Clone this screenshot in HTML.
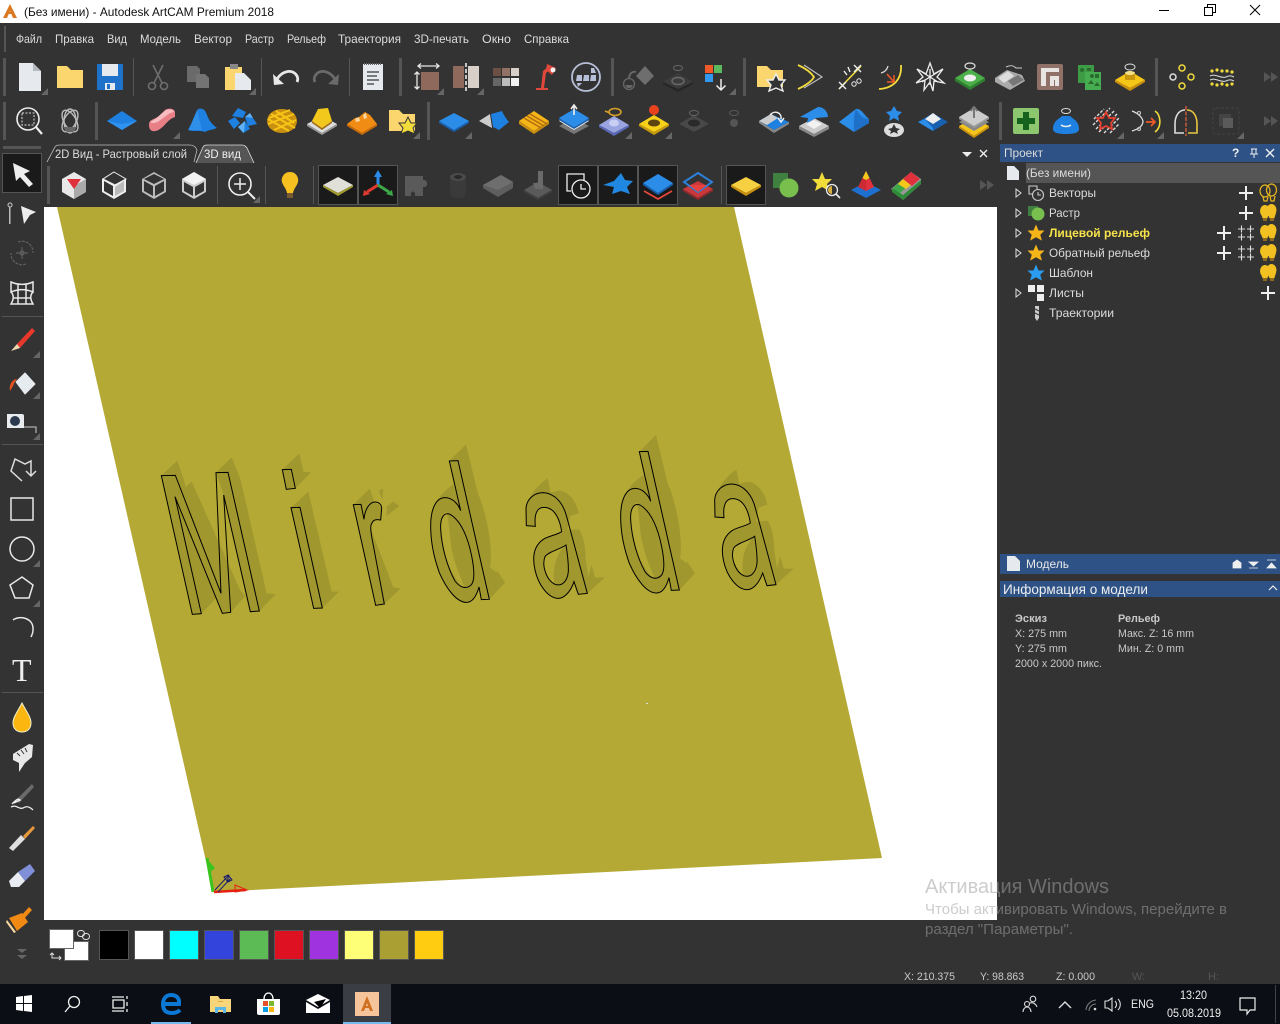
<!DOCTYPE html>
<html lang="ru"><head><meta charset="utf-8"><title>Autodesk ArtCAM Premium 2018</title>
<style>html,body{margin:0;padding:0;background:#333;overflow:hidden}svg{display:block}
text{font-family:"Liberation Sans","Noto Sans CJK SC",sans-serif}
.m{font-size:12px;fill:#dcdcdc}.s{font-size:11px;fill:#c8c8c8}
.o{fill:none;stroke:#000;stroke-width:3}.h{fill:#a0972f}
.g{fill:none;stroke:#6e6e6e;stroke-width:1.6}</style></head>
<body>
<svg xmlns="http://www.w3.org/2000/svg" width="1280" height="1024" viewBox="0 0 1280 1024">
<defs>
<polygon id="tri" points="6,0 6,7 -1,7" fill="#666"/>
<g id="bulb"><ellipse cx="-3" cy="-2" rx="5" ry="6" fill="#f2c020"/><polygon points="-7,1 1,1 -1,6 -5,6" fill="#f2c020"/><ellipse cx="3.500" cy="-3" rx="5" ry="6" fill="#f2c020"/><polygon points="-1,0 8,0 6,6 2,6" fill="#f2c020"/><rect x="-5" y="5" width="4" height="3" fill="#8d6a20"/><rect x="2" y="5" width="4" height="3" fill="#8d6a20"/></g>
<g id="star"><polygon points="0,-10 3,-3 10,-3 5,2 7,9 0,5 -7,9 -5,2 -10,-3 -3,-3"/></g>
<g id="plus"><path d="M-7,0 H7 M0,-7 V7" stroke="#eee" stroke-width="2" fill="none"/></g>
<g id="pp"><path d="M-8,-4 h7 M-4.500,-7.500 v7 M1,-4 h7 M4.500,-7.500 v7 M-8,4 h7 M-4.500,.500 v7 M1,4 h7 M4.500,.500 v7" stroke="#ddd" stroke-width="1.100" fill="none"/></g>
<path id="dar" d="M0,-5 L7,0 L0,5Z M7,-5 L14,0 L7,5Z" fill="#555"/>
<path id="D" d="M478,65 L504,64 L598,480 L574,481 L567,443 C558,475 545,490 528,489 C500,488 470,450 448,400 C430,350 422,300 422,260 C422,205 440,175 465,175 C488,175 505,195 512,214 Z M480,225 C462,218 450,235 452,270 C455,320 470,380 495,425 C510,445 530,452 545,435 C555,420 552,385 545,350 C535,300 515,245 480,225 Z"/>
<path id="A" d="M139,287 L138,235 C140,205 165,188 190,188 C225,190 250,220 260,260 L322,490 L295,493 L282,455 C270,490 250,505 235,505 C205,505 175,465 165,420 C155,375 165,345 190,328 C205,318 230,315 245,305 C240,270 225,232 192,232 C172,232 162,250 166,289 Z M258,345 C240,358 205,365 195,380 C185,405 198,450 225,463 C245,470 262,455 265,425 C266,400 262,370 258,345 Z"/>
<g id="As"><path class="h" d="M139,287 L138,235 C140,210 170,165 203,145 L212,188 L222,185 C255,170 290,210 296,250 L270,258 L262,300 L298,298 C320,340 315,380 318,395 L325,440 L335,405 L345,442 L375,442 L322,490 L295,493 L282,455 C270,490 250,505 235,505 C205,505 175,465 165,420 C155,375 165,345 190,328 C205,318 230,315 245,305 C240,270 225,232 192,232 C172,232 162,250 166,289Z"/><path fill="#b4a935" d="M258,345 C240,358 205,365 195,380 C185,405 198,450 225,463 C215,430 225,370 258,345Z"/></g>
<g id="Ds"><path class="h" d="M478,65 L528,15 L563,160 C590,220 610,330 600,385 L620,400 L622,395 L645,430 L598,480 L574,481 L567,443 C558,475 545,490 528,489 C500,488 470,450 448,400 C430,350 422,300 422,260 C422,205 445,165 490,135 L498,165Z"/><path fill="#b4a935" d="M470,217 C452,225 448,270 460,320 C470,370 490,420 525,448 C515,420 495,380 485,330 C478,290 478,250 470,217Z"/></g>
</defs>

<rect width="1280" height="1024" fill="#333"/>
<!-- title bar -->
<rect width="1280" height="23" fill="#fff"/>
<path d="M3,18 L10,4 L17,18 L13,18 L10,11 L7,18Z" fill="#d97a22"/><rect x="8" y="12" width="5" height="2" fill="#d97a22"/>
<text x="24" y="16" font-size="12" fill="#111" textLength="250" lengthAdjust="spacingAndGlyphs">(Без имени) - Autodesk ArtCAM Premium 2018</text>
<path d="M1159,10.500 H1169" stroke="#000"/>
<path d="M1204.500,7.500 H1212.500 V15.500 H1204.500Z M1207.500,7.500 V4.500 H1215.500 V12.500 H1212.500" fill="none" stroke="#000"/>
<path d="M1250,5 L1260,15 M1260,5 L1250,15" stroke="#000"/>

<!-- menu -->
<rect x="4" y="26" width="2" height="26" fill="#555"/>
<text class="m" x="16" y="43" textLength="26" lengthAdjust="spacingAndGlyphs">Файл</text><text class="m" x="55" y="43" textLength="39" lengthAdjust="spacingAndGlyphs">Правка</text><text class="m" x="107" y="43" textLength="20" lengthAdjust="spacingAndGlyphs">Вид</text><text class="m" x="140" y="43" textLength="41" lengthAdjust="spacingAndGlyphs">Модель</text><text class="m" x="194" y="43" textLength="38" lengthAdjust="spacingAndGlyphs">Вектор</text><text class="m" x="245" y="43" textLength="29" lengthAdjust="spacingAndGlyphs">Растр</text><text class="m" x="287" y="43" textLength="39" lengthAdjust="spacingAndGlyphs">Рельеф</text><text class="m" x="338" y="43" textLength="63" lengthAdjust="spacingAndGlyphs">Траектория</text><text class="m" x="414" y="43" textLength="55" lengthAdjust="spacingAndGlyphs">3D-печать</text><text class="m" x="482" y="43" textLength="29" lengthAdjust="spacingAndGlyphs">Окно</text><text class="m" x="524" y="43" textLength="45" lengthAdjust="spacingAndGlyphs">Справка</text>

<!-- grips & separators -->
<g fill="#555">
<rect x="3" y="58" width="3" height="38"/><rect x="3" y="102" width="3" height="38"/>
<rect x="133" y="58" width="1" height="38"/><rect x="261" y="58" width="1" height="38"/><rect x="349" y="58" width="1" height="38"/>
<rect x="399" y="58" width="3" height="38"/><rect x="611" y="58" width="3" height="38"/><rect x="743" y="58" width="3" height="38"/><rect x="1155" y="58" width="3" height="38"/>
<rect x="95" y="102" width="3" height="38"/><rect x="427" y="102" width="3" height="38"/><rect x="999" y="102" width="3" height="38"/>
<rect x="3" y="146" width="38" height="3"/>
<rect x="47" y="166" width="3" height="38"/><rect x="217" y="166" width="1" height="38"/><rect x="265" y="166" width="1" height="38"/><rect x="313" y="166" width="1" height="38"/><rect x="721" y="166" width="1" height="38"/>
</g>

<!-- row 1 -->
<g transform="translate(30,77)"><path d="M-11,-14 H3 L11,-6 V14 H-11Z" fill="#e6eaee"/><path d="M3,-14 L11,-6 H3Z" fill="#b5bac0"/></g><use href="#tri" x="42" y="88"/>
<g transform="translate(70,77)"><path d="M-13,-11 H-3 L1,-7 H13 V11 H-13Z" fill="#fbd66f"/></g>
<g transform="translate(110,77)"><path d="M-13,-13 H13 V13 H-13Z" fill="#1f72c9"/><rect x="-8" y="-13" width="16" height="12" fill="#e6eaee"/><rect x="-5" y="6" width="10" height="7" fill="#e6eaee"/><rect x="-3" y="7" width="3" height="5" fill="#1f72c9"/></g>
<g transform="translate(158,77)" class="g"><path d="M-5,-12 L4,6 M5,-12 L-4,6" /><circle cx="-6" cy="9" r="3.500"/><circle cx="6" cy="9" r="3.500"/></g>
<g transform="translate(198,77)" fill="#6a6a6a"><path d="M-11,-11 H-1 L2,-8 V5 H-11Z"/><path d="M-2,-3 H7 L11,1 V11 H-2Z" fill="#747474"/></g>
<g transform="translate(238,77)"><path d="M-13,-10 H4 V13 H-13Z" fill="#fbd66f"/><rect x="-8" y="-13" width="8" height="5" fill="#888"/><path d="M-3,-4 H6 L13,3 V13 H-3Z" fill="#e6eaee"/></g><use href="#tri" x="250" y="88"/>
<g transform="translate(286,77)"><path d="M-9,2 C-3,-7 7,-8 11,-1 C12,1 12,3 11,5" fill="none" stroke="#e8e8e8" stroke-width="2.800"/><polygon points="-13,-3 -12,8 -2,7" fill="#e8e8e8"/></g>
<g transform="translate(326,77)"><path d="M9,2 C3,-7 -7,-8 -11,-1 C-12,1 -12,3 -11,5" fill="none" stroke="#6a6a6a" stroke-width="2.800"/><polygon points="13,-3 12,8 2,7" fill="#6a6a6a"/></g>
<g transform="translate(373,77)"><rect x="-10" y="-13" width="20" height="26" fill="#e6eaee"/><path d="M-6,-5 H6 M-6,-1 H4 M-6,3 H6 M-6,7 H1" stroke="#555" stroke-width="1.400"/><path d="M-9,-13 H9" stroke="#666" stroke-width="2" stroke-dasharray="1 1"/></g>
<g transform="translate(426,77)"><rect x="-5" y="-5" width="18" height="18" fill="#8f6a5c"/><path d="M-8,-11 H13 M-5,-13.500 L-8,-11 L-5,-8.500 M10,-13.500 L13,-11 L10,-8.500 M-9,-5 V12 M-11.500,-2.500 L-9,-5 L-6.500,-2.500 M-11.500,9.500 L-9,12 L-6.500,9.500" fill="none" stroke="#e8e8e8" stroke-width="1.300"/></g><use href="#tri" x="438" y="88"/>
<g transform="translate(466,77)"><rect x="-13" y="-11" width="11" height="22" fill="#8f6a5c"/><rect x="2" y="-11" width="11" height="22" fill="#d9cfc9"/><path d="M0,-14 V14" stroke="#e8e8e8" stroke-width="1.600" stroke-dasharray="4 2"/></g><use href="#tri" x="478" y="88"/>
<g transform="translate(506,77)"><rect x="-13" y="-9" width="8" height="8" fill="#6c4f43"/><rect x="-4" y="-9" width="8" height="8" fill="#917264"/><rect x="5" y="-9" width="8" height="8" fill="#d9cfc9"/><rect x="-13" y="1" width="8" height="8" fill="#666"/><rect x="-4" y="1" width="8" height="8" fill="#bbb"/><rect x="5" y="1" width="8" height="8" fill="#f2f2f2"/></g>
<g transform="translate(546,77)" fill="#e0483c"><rect x="-10" y="11" width="12" height="2"/><path d="M-5,11 L-3,-6 L3,-11 L5,-8 L0,-4 L-2,11Z"/><path d="M1,-13 L10,-9 L6,-2 L0,-7Z"/><circle cx="7" cy="-7" r="2.500" fill="#f2f2f2"/></g>
<g transform="translate(586,77)"><circle r="14" fill="none" stroke="#b8bfd8" stroke-width="1.800"/><g fill="#b8bfd8"><path d="M-9,-2 h5 v6 h-6Z M-2,-2 h5 v6 h-6Z M5,-2 h5 v6 h-6Z M5,-9 h3 l2,5 h-5Z M-9,6 h5 l-4,4Z"/></g></g>
<g transform="translate(637,77)"><polygon points="-3,-3 6,-13 15,-3 6,6" fill="#6e6e6e" transform="translate(2,2)"/><circle cx="-8" cy="7" r="5.500" fill="none" stroke="#666" stroke-width="1.300"/><path d="M-12,8 H-4 L-6,11 H-10Z" fill="#666"/><path d="M-8,2 C-8,-4 -4,-6 -1,-5" stroke="#666" fill="none" stroke-width="2"/></g>
<g transform="translate(678,77)"><polygon points="-15,5 0,-4 15,5 0,12" fill="#3c3c3c"/><polygon points="-15,5 0,12 15,5 15,7 0,15 -15,7" fill="#262626"/><ellipse cy="4" rx="6" ry="3.500" fill="none" stroke="#6a6a6a" stroke-width="1.400"/><ellipse cy="-9" rx="4.500" ry="2.500" fill="none" stroke="#6a6a6a"/></g>
<g transform="translate(717,77)"><rect x="-12" y="-12" width="8" height="8" fill="#f05a28"/><rect x="-3" y="-12" width="8" height="8" fill="#5cb85c"/><rect x="-12" y="-3" width="8" height="8" fill="#3399ee"/><path d="M4,2 V13 M-0.500,8.500 L4,13 L8.500,8.500" stroke="#eee" stroke-width="1.500" fill="none"/></g><use href="#tri" x="730" y="88"/>
<g transform="translate(770,77)"><path d="M-13,-11 H-3 L1,-7 H13 V10 H-13Z" fill="#fbd66f"/><polygon points="6,-3 9,3 15,3 11,8 13,14 6,11 -1,14 1,8 -3,3 3,3" fill="#333" stroke="#eee" stroke-width="1.400"/></g>
<g transform="translate(810,77)" fill="none"><path d="M-12,-12 C-3,-8 2,-3 4,0 C2,4 -5,9 -12,12" stroke="#f2dc3c" stroke-width="1.800"/><path d="M-6,-12 L12,0 L-6,11" stroke="#ccc" stroke-width="1.200" opacity=".9"/></g>
<g transform="translate(850,77)" fill="none"><path d="M-11,12 L11,-11" stroke="#f2dc3c" stroke-width="1.600"/><path d="M4,-12 L11,-5 M11,-12 L4,-5 M-11,5 L-4,12 M-4,5 L-11,12 M-6,-6 L-3,-2 M-2,-10 L0,-5" stroke="#eee" stroke-width="1.400"/><circle cx="4" cy="7" r="2.200" stroke="#eee"/><circle cx="9" cy="4" r="2.200" stroke="#eee"/></g>
<g transform="translate(890,77)" fill="none"><path d="M11,-12 C12,2 4,11 -11,12" stroke="#f2dc3c" stroke-width="1.800"/><path d="M-2,-11 C-3,-7 -5,-5 -9,-4" stroke="#ddd" stroke-width="1.300"/><path d="M-3,-3 L4,5 M4,-2 V5 H-3" stroke="#f05a28" stroke-width="1.500"/></g>
<g transform="translate(930,77)" fill="none" stroke="#eee" stroke-width="1.300"><path d="M0,-14 L4,-3 L13,-8 L7,0 L14,6 L4,4 L3,14 L0,5 L-6,13 L-5,3 L-14,6 L-7,0 L-13,-8 L-4,-3Z M0,-8 V8 M-8,-5 L8,5 M8,-5 L-8,5"/></g>
<g transform="translate(970,79)"><polygon points="-15,-1 0,-10 15,-1 0,8" fill="#4cb04a"/><polygon points="-15,-1 0,8 15,-1 15,2 0,11 -15,2" fill="#2e7f30"/><ellipse cy="-1" rx="6" ry="3.500" fill="#eee"/><ellipse cy="-13" rx="5" ry="3" fill="none" stroke="#ddd" stroke-width="1.200"/></g>
<g transform="translate(1010,78)"><polygon points="-15,0 -3,-8 12,-3 15,3 0,12 -15,4" fill="#aaa"/><path d="M-12,0 L-2,-7 L4,-2 L-6,5Z" fill="#ddd"/><path d="M-2,3 L8,-3 L14,2 L3,8Z" fill="#777"/><path d="M-4,-11 C0,-13 3,-13 6,-10 H12" stroke="#ccc" fill="none"/></g>
<g transform="translate(1050,77)"><rect x="-13" y="-13" width="26" height="26" rx="2" fill="#8f7168"/><path d="M-9,9 V-9 H9 V-5 H-4 V9Z M0,9 V-1 H9 V9 H5 V3 H4 V9Z" fill="#e8e4e2"/></g>
<g transform="translate(1090,77)"><rect x="-12" y="-12" width="16" height="18" fill="#3d9b46"/><rect x="-5" y="-5" width="16" height="18" fill="#46ad50"/><g fill="#2a6b30"><circle cx="-8" cy="-7" r="2"/><rect x="-3" y="-9" width="4" height="3"/><polygon points="-2,7 1,3 4,7"/><polygon points="4,9 7,5 10,9"/><circle cx="2" cy="-1" r="2"/><rect x="5" y="-3" width="4" height="4"/></g></g>
<g transform="translate(1130,79)"><polygon points="-15,1 0,-8 15,1 0,9" fill="#f5c518"/><polygon points="-15,1 0,9 15,1 15,3 0,12 -15,3" fill="#c98f10"/><rect x="-5" y="-6" width="10" height="7" fill="#c8960f"/><ellipse cy="-6" rx="5" ry="2" fill="#f2e088"/><ellipse cy="-12" rx="5" ry="3" fill="none" stroke="#ddd"/></g>
<g transform="translate(1182,77)" fill="none" stroke="#f2dc3c" stroke-width="1.500"><circle cy="-9" r="3"/><circle cx="9" r="3"/><circle cy="9" r="3"/><circle cx="-9" r="3" stroke="#ddd"/></g>
<g transform="translate(1222,77)"><path d="M-12,-1 C-6,-4 -2,2 4,0 C8,-2 10,-1 12,0 M-12,3 C-6,0 -2,6 4,4 C8,2 10,3 12,4" fill="none" stroke="#ddd"/><g fill="#f2dc3c"><circle cx="-10" cy="-6" r="1.600"/><circle cx="-5" cy="-7" r="1.600"/><circle cx="0" cy="-6" r="1.600"/><circle cx="5" cy="-6" r="1.600"/><circle cx="10" cy="-5" r="1.600"/><circle cx="-10" cy="7" r="1.600"/><circle cx="-5" cy="8" r="1.600"/><circle cx="0" cy="7" r="1.600"/><circle cx="5" cy="8" r="1.600"/><circle cx="10" cy="7" r="1.600"/></g></g>
<use href="#dar" x="1264" y="77"/>

<!-- row 2 -->
<g transform="translate(30,121)" fill="none"><circle cx="-2" cy="-2" r="11" stroke="#eee" stroke-width="1.600"/><rect x="-8" y="-8" width="12" height="12" stroke="#ddd" stroke-dasharray="2 1.500"/><path d="M6,6 L12,13" stroke="#eee" stroke-width="2.200"/></g>
<g transform="translate(70,121)" fill="none" stroke="#bbb" stroke-width="1.400"><ellipse rx="6" ry="12"/><ellipse rx="12" ry="6" transform="rotate(60)"/><ellipse rx="12" ry="6" transform="rotate(-60)"/><path d="M-7,6 H7 L3,11 H-3Z" fill="#666" stroke="none"/></g>
<g transform="translate(122,121)"><polygon points="-15,0 0,-10 15,0 0,9" fill="#1e80e0"/><polygon points="-15,0 0,9 15,0 0,3" fill="#2f92ee"/></g>
<g transform="translate(162,121)"><path d="M-13,4 C-13,-2 -8,-1 -3,-5 L3,-11 C6,-13 12,-13 13,-9 L13,-4 C6,-2 4,4 -2,8 C-6,11 -13,12 -13,4Z" fill="#e87f86"/><path d="M-12,1 C-8,-1 -4,-4 -1,-7 L4,-11 C7,-12 11,-12 12,-9 C6,-8 2,-3 -3,0 C-6,2 -9,3 -12,1Z" fill="#f6bcc0"/></g><use href="#tri" x="174" y="132"/>
<g transform="translate(202,121)"><path d="M-14,9 C-10,2 -8,-5 -4,-12 C0,-13 3,-12 5,-6 C7,0 11,4 15,7 C10,9 6,9 3,11 C-2,9 -8,11 -14,9Z" fill="#1e80e0"/><path d="M-5,-11 L0,9 L-13,9Z" fill="#2f90ea"/></g>
<g transform="translate(242,121)" fill="#1e80e0"><polygon points="-4,-13 4,-9 1,-3 -10,-5"/><polygon points="-14,0 -7,-4 -2,2 -8,8"/><polygon points="3,-4 11,-3 15,3 6,5"/><polygon points="-4,6 3,0 8,8 1,12"/><polygon points="3,-4 8,-8 11,-3" fill="#5fb0f5"/><polygon points="-4,6 3,0 2,12" fill="#5fb0f5"/></g>
<g transform="translate(282,121)"><ellipse rx="15" ry="12" fill="#c98f10"/><path d="M-13,-3 L8,-11 M-14,3 L12,-7 M-8,9 L14,-1 M-11,-7 L13,7 M-6,-10 L12,2 M-14,-2 L7,10" stroke="#f5c518" stroke-width="2"/></g>
<g transform="translate(322,121)"><polygon points="-15,3 0,-5 15,3 0,12" fill="#ddd"/><polygon points="-15,3 0,12 15,3 15,5 0,14 -15,5" fill="#999"/><polygon points="-10,0 -4,-12 6,-13 10,0 0,7" fill="#f2c81c"/><polygon points="-10,0 0,7 10,0 10,2 0,9 -10,2" fill="#a26e1a"/></g>
<g transform="translate(362,121)"><polygon points="-15,3 -7,-3 -3,-4 3,-9 8,-6 15,3 0,12" fill="#f08c14"/><polygon points="-15,3 0,12 15,3 15,5 0,14 -15,5" fill="#c86a0a"/><polygon points="-7,-2 -3,-4 -2,0 -6,1" fill="#f8d8a0"/><polygon points="1,-6 4,-8 5,-3 2,-2" fill="#f8d8a0"/></g>
<g transform="translate(402,121)"><path d="M-13,-11 H-3 L1,-7 H13 V10 H-13Z" fill="#fbd66f"/><polygon points="6,-4 9,2 15,2 11,7 13,13 6,10 -1,13 1,7 -3,2 3,2" fill="#f2dc3c" stroke="#333"/></g><use href="#tri" x="414" y="132"/>
<g transform="translate(454,121)"><polygon points="-15,0 0,-8 15,0 0,9" fill="#2b8de8"/><polygon points="-15,0 0,9 15,0 15,2 0,11 -15,2" fill="#1860b0"/></g><use href="#tri" x="466" y="132"/>
<g transform="translate(494,121)"><polygon points="-15,0 -4,-7 -2,7" fill="#ccc"/><path d="M-3,-7 L8,-10 C10,-5 14,0 15,1 L5,9 L-1,6Z" fill="#1e80e0"/></g>
<g transform="translate(534,121)"><polygon points="-15,0 0,-10 15,0 0,10" fill="#f5b518"/><polygon points="-15,0 0,10 15,0 15,3 0,13 -15,3" fill="#c98f10"/><path d="M-10,-3 L7,7 M-7,-5 L10,5 M-4,-7 L13,3" stroke="#b06c10" stroke-width="1.400"/></g>
<g transform="translate(574,121)"><polygon points="-15,5 0,-3 15,5 0,13" fill="#777"/><polygon points="-15,0 0,-9 15,0 0,9" fill="#eee"/><polygon points="-15,-3 0,-12 15,-3 0,6" fill="#2b8de8"/><polygon points="-15,-3 0,6 15,-3 15,-1 0,8 -15,-1" fill="#1860b0"/><path d="M0,-6 V-16 M-3,-12 L0,-16 L3,-12" stroke="#eee" stroke-width="1.600" fill="none"/></g>
<g transform="translate(614,121)"><polygon points="-15,4 0,-5 15,4 0,12" fill="#9aa4e0"/><polygon points="-15,4 0,12 15,4 15,6 0,15 -15,6" fill="#5a68b8"/><ellipse cy="2" rx="5" ry="3.500" fill="#c8cff2"/><ellipse cx="1" cy="-9" rx="6" ry="3.500" fill="none" stroke="#d4a028" stroke-width="1.600"/><path d="M-9,-10 L-4,-8" stroke="#d4a028" stroke-width="1.600"/></g><use href="#tri" x="626" y="132"/>
<g transform="translate(654,122)"><polygon points="-15,2 0,-7 15,2 0,10" fill="#f7d117"/><polygon points="-15,2 0,10 15,2 15,4 0,13 -15,4" fill="#c89a10"/><ellipse cy="1" rx="6" ry="3.500" fill="#5c4410"/><circle cy="-12" r="5" fill="#e8421e"/></g><use href="#tri" x="666" y="132"/>
<g transform="translate(694,122)"><polygon points="-15,2 0,-7 15,2 0,10" fill="#484848"/><polygon points="-15,2 0,10 15,2 15,4 0,13 -15,4" fill="#333"/><ellipse cy="1" rx="6" ry="3.500" fill="#2a2a2a"/><ellipse cy="-9" rx="4.500" ry="2.500" fill="none" stroke="#666"/></g>
<g transform="translate(734,119)"><ellipse cy="-6" rx="4.500" ry="2.500" fill="none" stroke="#5a5a5a"/><circle cy="4" r="4" fill="#555"/></g>
<g transform="translate(774,121)"><polygon points="-15,0 -3,-7 15,1 0,9" fill="#1e80e0"/><polygon points="-15,0 -3,-7 4,-3 -7,4" fill="#ccc"/><polygon points="-15,0 0,9 15,1 15,3 0,12 -15,2" fill="#888"/><path d="M-4,-6 C0,-11 8,-9 7,-2 M4,-3 L7,1 L10,-3" stroke="#eee" stroke-width="1.500" fill="none"/></g>
<g transform="translate(814,121)"><polygon points="-15,5 0,-3 15,5 0,13" fill="#ccc"/><polygon points="-15,5 0,13 15,5 15,8 0,16 -15,8" fill="#888"/><polygon points="-8,3 0,-1 8,3 0,8" fill="#f2f2f2"/><path d="M-14,-4 L4,-14 C10,-14 14,-9 14,-4 L2,-3 L-7,2 L-6,-3Z" fill="#2b8de8"/></g>
<g transform="translate(854,121)"><path d="M-15,1 L2,-12 C7,-13 10,-6 15,-2 L15,2 L0,11Z" fill="#2b8de8"/><path d="M2,-12 C5,-7 8,-2 15,-2 L15,2 L0,11 C0,4 -1,-4 2,-12Z" fill="#1e70c8"/></g>
<g transform="translate(894,121)"><polygon points="0,-15 3,-10 8,-9 4,-5 5,0 0,-3 -5,0 -4,-5 -8,-9 -3,-10" fill="#2b8de8"/><ellipse cy="9" rx="10" ry="7" fill="#ddd"/><polygon points="0,3 2,7 6,8 3,10 4,13 0,11 -4,13 -3,10 -6,8 -2,7" fill="#333"/></g>
<g transform="translate(933,121)"><polygon points="-15,1 0,-8 15,1 0,10" fill="#1860b0"/><polygon points="-8,-2 0,-8 8,-2 0,3" fill="#eee"/><polygon points="-15,1 0,10 0,7 -8,-2" fill="#2b8de8"/></g>
<g transform="translate(974,121)"><polygon points="-15,5 0,-3 15,5 0,15" fill="#f5c518"/><polygon points="-15,5 0,15 15,5 15,7 0,17 -15,7" fill="#c98f10"/><polygon points="-15,1 0,-7 15,1 0,10" fill="#888"/><polygon points="-15,-4 0,-13 15,-4 0,5" fill="#ccc"/><polygon points="-15,-4 0,5 15,-4 15,-2 0,7 -15,-2" fill="#999"/><path d="M0,-3 V-14 M-3.500,-10 L0,-14 L3.500,-10" stroke="#777" stroke-width="2" fill="none"/></g>
<g transform="translate(1026,121)"><rect x="-13" y="-13" width="26" height="26" rx="2" fill="#8cc66e"/><path d="M-3,-9 H3 V-3 H9 V3 H3 V9 H-3 V3 H-9 V-3 H-3Z" fill="#15611e"/></g>
<g transform="translate(1066,121)"><path d="M-13,8 C-13,0 -7,-2 -4,-5 H4 C7,-2 13,0 13,8 C13,12 7,13 0,13 C-7,13 -13,12 -13,8Z" fill="#1e80e0"/><path d="M-5,4 C-2,6 2,6 5,4" stroke="#eee" fill="none" stroke-width="1.500"/><ellipse cy="-10" rx="4.500" ry="2.500" fill="none" stroke="#ddd"/></g>
<g transform="translate(1106,121)"><path d="M-12,-2 L-2,-12 M-13,4 L4,-13 M-10,8 L9,-11 M-7,11 L12,-8 M-2,12 L13,-3 M4,12 L13,3" stroke="#ddd" stroke-width="1.400" stroke-dasharray="3 1.500"/><polygon points="0,-9 3,-3 9,-3 5,2 6,8 0,5 -6,8 -5,2 -9,-3 -3,-3" fill="#333" stroke="#e84030" stroke-width="1.700"/></g><use href="#tri" x="1118" y="132"/>
<g transform="translate(1146,121)" fill="none"><path d="M-14,-10 C-6,-7 -3,-2 -3,1 C-4,6 -8,8 -14,10" stroke="#ddd" stroke-width="1.300"/><circle cx="-7" cy="-8" r="1.500" stroke="#ccc"/><circle cx="-7" cy="8" r="1.500" stroke="#ccc"/><path d="M0,1 H8 M5,-3 L9,1 L5,5" stroke="#f05a28" stroke-width="1.700"/><path d="M9,-10 C15,-6 16,6 9,11" stroke="#f2dc3c" stroke-width="1.600"/></g><use href="#tri" x="1158" y="132"/>
<g transform="translate(1186,121)" fill="none"><path d="M-1,-11 C-8,-11 -11,-4 -11,3 V12 H-2" stroke="#ddd" stroke-width="1.600"/><path d="M1,-11 C8,-11 11,-4 11,3 V12 H2" stroke="#e8c840" stroke-width="1.600"/><path d="M0,-15 V15" stroke="#c85a3c" stroke-width="1.500" stroke-dasharray="4 1.500"/></g>
<g transform="translate(1226,121)"><rect x="-13" y="-13" width="26" height="26" rx="3" fill="none" stroke="#444" stroke-dasharray="3 2"/><rect x="-7" y="-7" width="12" height="12" fill="#444"/><rect x="-3" y="-3" width="10" height="10" fill="#5a5a5a"/></g><use href="#tri" x="1238" y="132"/>
<use href="#dar" x="1264" y="121"/>

<!-- tabs -->
<path d="M47,162 L55,147 Q56,145 60,145 H190 Q195,145 197,150 L194,162" fill="#333" stroke="#bbb" stroke-width=".8"/>
<path d="M196,163 L203,147 Q204,145 207,145 H242 Q245,145 247,148 L254,163Z" fill="#555"/><path d="M196,163 L203,147 Q204,145 207,145 H242 Q245,145 247,148 L254,163" fill="none" stroke="#ddd" stroke-width=".8"/>
<text x="55" y="158" font-size="12" fill="#ddd" textLength="132" lengthAdjust="spacingAndGlyphs">2D Вид - Растровый слой</text>
<text x="204" y="158" font-size="12" fill="#eee" textLength="37" lengthAdjust="spacingAndGlyphs">3D вид</text>
<polygon points="962,152 972,152 967,157" fill="#eee"/><path d="M980,150 L987,157 M987,150 L980,157" stroke="#eee" stroke-width="1.400"/>

<!-- row 3 boxes -->
<g fill="#1a1a1a" stroke="#555"><rect x="318.500" y="165.500" width="39" height="39"/><rect x="358.500" y="165.500" width="39" height="39"/><rect x="558.500" y="165.500" width="39" height="39"/><rect x="598.500" y="165.500" width="39" height="39"/><rect x="638.500" y="165.500" width="39" height="39"/><rect x="726.500" y="165.500" width="39" height="39"/></g>
<g transform="translate(74,185)"><polygon points="0,-13 12,-6 12,7 0,14 -12,7 -12,-6" fill="#e8e8e8"/><polygon points="0,14 12,7 12,-6 0,1" fill="#aaa"/><polygon points="-7,-6 7,-6 0,4" fill="#e0303c"/></g>
<g transform="translate(114,185)"><polygon points="0,-13 12,-6 12,7 0,14 -12,7 -12,-6" fill="#eee"/><polygon points="-10,-4 -1,1 -1,11 -10,6" fill="#333"/><polygon points="0,-13 12,-6 1,0 -11,-6" fill="#333" stroke="#eee"/><polygon points="1,2 10,-4 10,6 1,11" fill="#bbb"/></g>
<g transform="translate(154,185)"><polygon points="0,-13 12,-6 12,7 0,14 -12,7 -12,-6" fill="#bbb"/><polygon points="0,-11 10,-6 0,-1 -10,-6" fill="#333"/><polygon points="-10,-4 -1,1 -1,11 -10,6" fill="#333"/><polygon points="1,1 10,-4 10,6 1,11" fill="#333"/></g>
<g transform="translate(194,185)"><polygon points="0,-13 12,-6 12,7 0,14 -12,7 -12,-6" fill="#ccc"/><polygon points="0,-13 12,-6 0,0 -12,-6" fill="#f2f2f2"/><polygon points="-10,-3 -1,2 -1,11 -10,6" fill="#333"/><polygon points="1,2 10,-3 10,6 1,11" fill="#333"/></g>
<g transform="translate(241,185)" fill="none"><circle cx="-1" cy="-1" r="11" stroke="#eee" stroke-width="1.600"/><path d="M-7,-1 H5 M-1,-7 V5" stroke="#eee" stroke-width="1.500"/><path d="M7,7 L14,14" stroke="#eee" stroke-width="2"/></g><use href="#tri" x="254" y="196"/>
<g transform="translate(290,185)"><path d="M0,-13 C7,-13 9,-6 8,-3 C7,1 4,3 3,8 H-3 C-4,3 -7,1 -8,-3 C-9,-6 -7,-13 0,-13Z" fill="#f6c120"/><rect x="-3" y="8" width="6" height="5" fill="#7a5a30"/></g>
<g transform="translate(338,185)"><polygon points="-15,0 0,-8 15,0 0,8" fill="#e0e0d8"/><polygon points="-15,0 0,8 15,0 15,2 0,11 -15,2" fill="#a09a30"/></g>
<g transform="translate(378,185)"><path d="M0,0 V-9" stroke="#2a8ce8" stroke-width="3"/><polygon points="-4,-8 4,-8 0,-15" fill="#2a8ce8"/><path d="M0,0 L-11,7" stroke="#e03a30" stroke-width="3"/><polygon points="-14,5 -8,9 -15,11" fill="#e03a30"/><path d="M0,0 L11,7" stroke="#3da84a" stroke-width="3"/><polygon points="14,5 8,9 15,11" fill="#3da84a"/></g>
<g transform="translate(418,185)" fill="#5a5a5a"><path d="M-13,-9 H5 V-5 C10,-6 11,3 5,2 V11 H-3 C-2,5 -8,5 -7,11 H-13Z"/></g>
<g transform="translate(458,185)"><rect x="-8" y="-11" width="16" height="24" rx="6" fill="#3a3a3a"/><ellipse cy="-8" rx="8" ry="4" fill="#4a4a4a"/><ellipse cy="-8" rx="4" ry="2" fill="#2a2a2a"/></g>
<g transform="translate(498,185)"><polygon points="-15,0 3,-10 15,-3 15,3 0,12 -15,3" fill="#5e5e5e"/><polygon points="-15,0 3,-10 15,-3 0,5" fill="#6e6e6e"/></g>
<g transform="translate(538,185)"><polygon points="-14,5 0,-3 14,5 0,13" fill="#5a5a5a"/><polygon points="-14,5 0,13 14,5 14,7 0,15 -14,7" fill="#3f3f3f"/><path d="M-5,-2 H0 V-14 H5 V4 H-3Z" fill="#6a6a6a"/></g>
<g transform="translate(578,185)" fill="none" stroke="#eee" stroke-width="1.300"><path d="M-7,6 H-11 V-11 H6 V-5"/><circle cx="3" cy="4" r="9"/><path d="M3,-1 V4 H8"/></g>
<g transform="translate(618,184)"><polygon points="3,-11 7,-4 15,-3 9,3 12,10 3,7 -6,10 -4,3 -15,1 -4,-3" fill="#2088e0"/></g>
<g transform="translate(658,185)"><path d="M-14,6 L0,14 L14,6" fill="none" stroke="#e8483c" stroke-width="1.700"/><polygon points="-15,-2 0,-11 15,-2 0,8" fill="#2b8de8"/><polygon points="-15,-2 0,8 15,-2 15,0 0,10 -15,0" fill="#1860b0"/></g>
<g transform="translate(698,185)"><polygon points="-15,4 0,-4 15,4 0,13" fill="#c9383a"/><polygon points="-15,4 0,13 15,4 15,6 0,15 -15,6" fill="#8e2a2c"/><polygon points="-14,-3 0,-12 14,-3 0,7" fill="none" stroke="#2b7fd8" stroke-width="2"/><polygon points="-9,0 9,0 0,7" fill="#e8403c"/></g>
<g transform="translate(746,185)"><polygon points="-15,0 0,-8 15,0 0,8" fill="#f6d040"/><polygon points="-15,0 0,8 15,0 15,2 0,11 -15,2" fill="#c98f10"/></g>
<g transform="translate(786,185)"><rect x="-13" y="-12" width="15" height="15" fill="#3f7f40"/><circle cx="3" cy="3" r="9.500" fill="#78bf4e"/></g>
<g transform="translate(826,185)"><use href="#star" fill="#f2dc3c" transform="translate(-4,-3)"/><circle cx="6" cy="5" r="5.500" fill="#333" stroke="#eee" stroke-width="1.300"/><path d="M10,9 L14,13" stroke="#eee" stroke-width="1.600"/><path d="M6,1 A4,4 0 0 0 6,9Z" fill="#d8b040"/></g>
<g transform="translate(866,185)"><polygon points="-15,5 0,-3 15,5 0,13" fill="#1e70d0"/><polygon points="0,-14 8,2 0,6" fill="#e0303c"/><polygon points="0,-14 -8,2 0,6" fill="#cc2a34"/><polygon points="0,-14 3.500,-7 0,-5 -3.500,-7" fill="#f2c81c"/></g>
<g transform="translate(906,185)"><polygon points="-15,4 5,-13 15,-6 15,-1 -3,15" fill="#999"/><polygon points="-13,3 -4,-5 3,0 -7,9" fill="#3da84a"/><polygon points="-8,-1 -1,-8 7,-2 0,4" fill="#f2c81c"/><polygon points="-3,-6 5,-13 14,-6 6,1" fill="#e0303c"/><polygon points="-14,3 -3,10 15,-5 15,-1 -3,15 -14,7" fill="#2f8a3a"/></g>
<use href="#dar" x="980" y="185"/>

<!-- viewport -->
<rect x="44" y="207" width="953" height="713" fill="#fff"/>
<polygon points="57,207 734,207 882,858 213,892" fill="#b4a935"/>
<g transform="translate(140,430) scale(.33333)">
<path class="h" d="M64,137 L112,92 L132,150 L190,390 L227,505 L184,551 L157,553Z"/>
<path class="h" d="M105,200 L155,155 L240,345 L300,480 L316,498 L272,547 L247,550Z"/>
<path class="h" d="M228,128 L275,82 L302,150 L380,490 L408,492 L358,543 L331,545 L251,195Z"/>
<path class="h" d="M427,119 L478,70 L490,125 L513,127 L466,175 L439,178Z"/>
<path class="h" d="M453,233 L505,185 L575,485 L597,485 L547,534 L521,535Z"/>
<path class="h" d="M640,224 L690,175 L702,216 L725,230 L722,268 L700,268 L690,290 L760,472 L782,475 L733,522 L707,526Z"/>
<path class="h" d="M716,182 L730,175 L727,210Z M740,230 L760,215 L778,228 L740,258Z"/>
<path class="o" d="M64,137 L106,136 L243,490 L228,128 L264,127 L358,543 L331,545 L251,195 L272,547 L247,550 L105,200 L184,551 L157,553Z"/>
<path class="o" d="M427,119 L454,118 L466,175 L439,178Z M453,233 L480,232 L547,534 L521,535Z"/>
<path class="o" d="M640,224 L663,223 L672,268 C675,235 690,216 705,216 C718,216 725,225 725,235 L722,270 C710,268 700,268 697,278 C690,285 692,300 695,320 L733,522 L707,526Z"/>
</g>
<g transform="translate(480,430) scale(.33333)">
<use href="#Ds" x="-570" y="28"/><use href="#Ds"/><use href="#As"/><use href="#As" x="566" y="-26"/>
<use href="#D" x="-570" y="28" class="o"/><use href="#D" class="o"/><use href="#A" class="o"/><use href="#A" x="566" y="-26" class="o"/>
</g>
<rect x="646" y="703" width="2" height="1" fill="#ddd"/>
<!-- axes -->
<path d="M213,892 L207,858" stroke="#38c41c" stroke-width="3"/><polygon points="206,858 215,868 209,873" fill="#38c41c"/>
<path d="M214,892 L246,890" stroke="#e82010" stroke-width="2.500"/><polygon points="235,885 247,890 235,892" fill="none" stroke="#e82010"/>
<path d="M215,890 L229,875 L227,882 L230,880 M218,892 L231,878" stroke="#1a1a70" stroke-width="1" fill="none"/>
<polygon points="224,877 228,875 232,880 228,882" fill="none" stroke="#1a1a70"/>

<!-- left toolbar -->
<rect x="0" y="207" width="44" height="713" fill="#333"/>
<rect x="2.500" y="153.500" width="39" height="39" fill="#1a1a1a" stroke="#555"/>
<polygon points="13,163 30,171 24,174 33,184 29,187 20,177 16,181" fill="#eee"/>
<g><rect x="9" y="207" width="1.500" height="17" fill="#bbb"/><circle cx="10" cy="205" r="2" fill="none" stroke="#ccc"/><polygon points="21,206 36,212 30,215 24,224" fill="#eee"/></g>
<g transform="translate(22,253)" fill="none" stroke="#5e5e5e" stroke-width="1.200"><path d="M-4,-11 A11,11 0 0 1 11,0 M4,11 A11,11 0 0 1 -11,0" stroke-dasharray="3 1"/><path d="M0,-6 V6 M-6,0 H6"/><circle r="2"/></g>
<g transform="translate(22,293)" fill="none" stroke="#e8e8e8" stroke-width="1.500"><path d="M-11,-11 C-4,-8 4,-8 11,-11 V-1 C4,-4 -4,-4 -11,-1Z M-11,-1 C-8,2 -8,6 -11,11 H11 C8,6 8,2 11,-1 M-4,-9 V11 M4,-9 V11 M-9,5 H9"/></g>
<rect x="2" y="316" width="41" height="1" fill="#555"/>
<g transform="translate(22,340)"><polygon points="-5,4 10,-12 13,-9 -2,8" fill="#e8382c"/><polygon points="-5,4 -2,8 -11,11" fill="#f0d8b0"/></g><use href="#tri" x="34" y="351"/>
<g transform="translate(22,382)"><polygon points="-6,0 3,-9 13,2 3,12" fill="#e6ebf0" stroke="#e6ebf0" stroke-linejoin="round"/><path d="M-12,8 C-13,2 -9,-3 -5,-3 L-9,2 Z" fill="#e8501c"/><path d="M-12,9 C-13,3 -10,0 -7,-1 L-9,4Z" fill="#e8501c"/></g><use href="#tri" x="34" y="392"/>
<g transform="translate(22,422)"><path d="M-15,-8 H0 Q2,-8 2,-6 V6 H-15Z" fill="#e8ecef"/><circle cx="-7" cy="-1" r="5" fill="#2b3b4d"/><path d="M2,5 H14 V11" stroke="#ccc" fill="none"/></g><use href="#tri" x="34" y="433"/>
<rect x="2" y="444" width="41" height="1" fill="#555"/>
<path d="M22,480 L11,470 L15,458 L25,463 L31,460 L31,474 M26,470 L31,475 L36,470" fill="none" stroke="#ddd" stroke-width="1.500" transform="translate(0,1)"/>
<rect x="11" y="498" width="22" height="22" fill="none" stroke="#e8e8e8" stroke-width="1.500"/>
<circle cx="22" cy="549" r="12" fill="none" stroke="#e8e8e8" stroke-width="1.500"/><use href="#tri" x="34" y="560"/>
<polygon points="22,577 33,585 29,598 15,598 10,585" fill="none" stroke="#e8e8e8" stroke-width="1.500"/><use href="#tri" x="34" y="600"/>
<path d="M13,620 C20,615 34,618 33,630 C33,633 32,635 31,637" fill="none" stroke="#e8e8e8" stroke-width="1.500"/>
<text x="12" y="681" font-size="32" fill="#eee" style="font-family:'Liberation Serif',serif">T</text>
<rect x="2" y="692" width="41" height="1" fill="#555"/>
<path d="M22,703 C26,711 31,717 31,723 C31,729 27,732 22,732 C17,732 13,729 13,723 C13,717 18,711 22,703Z" fill="#fbb710" stroke="#f0f0d0"/>
<g transform="translate(22,757)"><path d="M-9,-3 L7,-13 L11,-12 L10,0 L3,6 L-3,15 L-3,6 L-9,3Z" fill="#e8e8e8"/><path d="M-5,-4 L-2,-1 M-1,-7 L2,-3 M3,-9 L5,-5" stroke="#333"/></g>
<g transform="translate(22,798)"><polygon points="-6,2 10,-14 12,-11 -3,5" fill="#6a6a6a"/><path d="M-10,6 C-6,2 -4,0 -2,2 L-8,5" stroke="#eee" fill="none" stroke-width="1.500"/><path d="M-11,9 C-5,6 -3,12 1,10 C4,8 7,8 11,12" stroke="#eee" fill="none" stroke-width="1.300"/></g>
<g transform="translate(22,837)"><polygon points="-13,11 -9,14 3,2 -1,-2" fill="#e0e0e0"/><polygon points="1,-1 11,-11 13,-9 3,2" fill="#e8983c"/></g>
<g transform="translate(22,876)"><polygon points="-4,-4 8,-12 13,-5 3,5" fill="#7f8fd8"/><polygon points="-4,-4 3,5 -3,11 -11,11 -13,5" fill="#e8ecf2"/></g>
<g transform="translate(20,919)"><polygon points="0,-2 9,-12 12,-9 3,1" fill="#f08a14"/><polygon points="-11,-1 2,-6 8,3 -3,12" fill="#f08a14"/><polygon points="-13,1 -4,13 -6,14 -14,3" fill="#f8d8a0"/></g>
<path d="M17,949 H27 L22,953Z M17,955 H27 L22,959Z" fill="#666"/>

<!-- swatches -->
<rect x="64.500" y="941.500" width="24" height="19" fill="#fff" stroke="#666"/>
<rect x="49.500" y="929.500" width="24" height="19" fill="#fff" stroke="#666"/>
<g fill="none" stroke="#ddd"><rect x="77.500" y="930.500" width="7" height="6" rx="3"/><rect x="82.500" y="933.500" width="7" height="6" rx="3"/><path d="M52,953 V958 H61 M50,955 L52,953 L54,955 M59,956 L61,958 L59,960"/></g>
<g stroke="#555" stroke-width="1"><rect x="99.500" y="930.500" width="29" height="29" fill="#000"/><rect x="134.500" y="930.500" width="29" height="29" fill="#fff"/><rect x="169.500" y="930.500" width="29" height="29" fill="#0ff"/><rect x="204.500" y="930.500" width="29" height="29" fill="#3344dd"/><rect x="239.500" y="930.500" width="29" height="29" fill="#5cbb55"/><rect x="274.500" y="930.500" width="29" height="29" fill="#dd1122"/><rect x="309.500" y="930.500" width="29" height="29" fill="#a033e0"/><rect x="344.500" y="930.500" width="29" height="29" fill="#ffff77"/><rect x="379.500" y="930.500" width="29" height="29" fill="#aa9f33"/><rect x="414.500" y="930.500" width="29" height="29" fill="#ffcc11"/></g>

<!-- right panel -->
<rect x="997" y="207" width="283" height="777" fill="#333"/>
<rect x="1000" y="144" width="280" height="18" fill="#2e5285"/>
<text x="1004" y="157" class="m" textLength="39" lengthAdjust="spacingAndGlyphs">Проект</text>
<text x="1232" y="157" font-size="12" fill="#eee" font-weight="bold">?</text>
<path d="M1251,149 H1257 M1252,149 V154 H1256 V149 M1250,154 H1258 M1254,154 V158" stroke="#eee" fill="none"/><path d="M1266,149 L1274,157 M1274,149 L1266,157" stroke="#eee" stroke-width="1.400"/>
<rect x="1026" y="163" width="254" height="20" fill="#555"/>
<path d="M1007,166 H1014 L1019,171 V180 H1007Z" fill="#e6eaee"/>
<text x="1026" y="177" class="m" textLength="65" lengthAdjust="spacingAndGlyphs">(Без имени)</text>
<g fill="none" stroke="#ddd"><path d="M1016,189 L1021,193 L1016,197Z M1016,209 L1021,213 L1016,217Z M1016,229 L1021,233 L1016,237Z M1016,249 L1021,253 L1016,257Z M1016,289 L1021,293 L1016,297Z"/></g>
<g fill="none" stroke="#ccc" stroke-width="1.100"><path d="M1033,194 H1029 V186 H1037 V189"/><circle cx="1038" cy="195" r="5.500"/><path d="M1038,192 V195 H1041"/></g>
<rect x="1028" y="206" width="10" height="10" fill="#3f7f40"/><circle cx="1038" cy="214" r="6.500" fill="#78bf4e"/>
<use href="#star" fill="#f5b518" transform="translate(1036,233) scale(.85)"/>
<use href="#star" fill="#f5b518" transform="translate(1036,253) scale(.85)"/>
<use href="#star" fill="#2a9df0" transform="translate(1036,273) scale(.85)"/>
<rect x="1028" y="285" width="7" height="7" fill="#eee"/><rect x="1037" y="285" width="7" height="7" fill="#eee"/><rect x="1037" y="294" width="7" height="7" fill="#eee"/>
<path d="M1035,306 H1039 V318 L1037,321 L1035,318Z" fill="#ccc"/><path d="M1035,309 L1039,311 M1035,313 L1039,315" stroke="#333"/>
<text x="1049" y="197" class="m" textLength="47" lengthAdjust="spacingAndGlyphs">Векторы</text>
<text x="1049" y="217" class="m" textLength="31" lengthAdjust="spacingAndGlyphs">Растр</text>
<text x="1049" y="237" font-size="12" font-weight="bold" fill="#f6e24a" textLength="101" lengthAdjust="spacingAndGlyphs">Лицевой рельеф</text>
<text x="1049" y="257" class="m" textLength="101" lengthAdjust="spacingAndGlyphs">Обратный рельеф</text>
<text x="1049" y="277" class="m" textLength="44" lengthAdjust="spacingAndGlyphs">Шаблон</text>
<text x="1049" y="297" class="m" textLength="35" lengthAdjust="spacingAndGlyphs">Листы</text>
<text x="1049" y="317" class="m" textLength="65" lengthAdjust="spacingAndGlyphs">Траектории</text>
<use href="#plus" x="1246" y="193"/><use href="#plus" x="1246" y="213"/><use href="#plus" x="1224" y="233"/><use href="#plus" x="1224" y="253"/><use href="#plus" x="1268" y="293"/>
<use href="#pp" x="1246" y="233"/><use href="#pp" x="1246" y="253"/>
<g fill="none" stroke="#e8b820" stroke-width="1.200" transform="translate(1268,193)"><ellipse cx="-3" cy="-2" rx="5" ry="6"/><ellipse cx="3.500" cy="-3" rx="5" ry="6"/><path d="M-5,4 L-4,8 H-1 L0,4 M2,3 L3,8 H6 L7,3"/></g>
<use href="#bulb" x="1268" y="213"/><use href="#bulb" x="1268" y="233"/><use href="#bulb" x="1268" y="253"/><use href="#bulb" x="1268" y="273"/>

<rect x="1000" y="554" width="280" height="20" fill="#2e5285"/>
<path d="M1007,556 H1015 L1020,561 V571 H1007Z" fill="#e6eaee"/>
<text x="1026" y="568" font-size="12" fill="#e8e8e8" textLength="43" lengthAdjust="spacingAndGlyphs">Модель</text>
<path d="M1237,560 L1241,563 V568 H1233 V563Z M1249,562 H1258 L1253.500,566Z M1249,568 H1258 M1267,560 H1276 M1267,568 H1276 L1271.500,563Z" fill="#eee" stroke="#eee" stroke-width=".8"/>
<rect x="1000" y="581" width="280" height="16" fill="#2e5285"/>
<text x="1003" y="594" font-size="14" fill="#eee" textLength="145" lengthAdjust="spacingAndGlyphs">Информация о модели</text>
<path d="M1269,590 L1273,586 L1277,590" fill="none" stroke="#eee" stroke-width="1.200"/>
<text class="s" x="1015" y="622" font-weight="bold" textLength="32" lengthAdjust="spacingAndGlyphs">Эскиз</text>
<text class="s" x="1118" y="622" font-weight="bold" textLength="42" lengthAdjust="spacingAndGlyphs">Рельеф</text>
<text class="s" x="1015" y="637" textLength="52" lengthAdjust="spacingAndGlyphs">X: 275 mm</text>
<text class="s" x="1015" y="652" textLength="52" lengthAdjust="spacingAndGlyphs">Y: 275 mm</text>
<text class="s" x="1015" y="667" textLength="87" lengthAdjust="spacingAndGlyphs">2000 x 2000 пикс.</text>
<text class="s" x="1118" y="637" textLength="76" lengthAdjust="spacingAndGlyphs">Макс. Z: 16 mm</text>
<text class="s" x="1118" y="652" textLength="66" lengthAdjust="spacingAndGlyphs">Мин. Z: 0 mm</text>

<!-- activation -->
<text x="925" y="893" font-size="20" fill="rgb(161,161,161)" fill-opacity=".54" textLength="184" lengthAdjust="spacingAndGlyphs">Активация Windows</text>
<text x="925" y="914" font-size="15" fill="rgb(161,161,161)" fill-opacity=".54" textLength="302" lengthAdjust="spacingAndGlyphs">Чтобы активировать Windows, перейдите в</text>
<text x="925" y="934" font-size="15" fill="rgb(161,161,161)" fill-opacity=".54" textLength="148" lengthAdjust="spacingAndGlyphs">раздел "Параметры".</text>

<!-- status -->
<text class="s" x="904" y="980" textLength="51" lengthAdjust="spacingAndGlyphs">X: 210.375</text>
<text class="s" x="980" y="980" textLength="44" lengthAdjust="spacingAndGlyphs">Y: 98.863</text>
<text class="s" x="1056" y="980" textLength="39" lengthAdjust="spacingAndGlyphs">Z: 0.000</text>
<text x="1132" y="980" font-size="11" fill="#555">W:</text>
<text x="1208" y="980" font-size="11" fill="#555">H:</text>

<!-- taskbar -->
<rect y="984" width="1280" height="40" fill="#0b0e14"/>
<rect x="343" y="984" width="48" height="40" fill="#3a3d44"/>
<rect x="151" y="1022" width="40" height="2" fill="#76b9ed"/><rect x="343" y="1022" width="48" height="2" fill="#76b9ed"/>
<path d="M16,997 L23,996 V1003 H16Z M24,996 L32,995 V1003 H24Z M16,1004 H23 V1011 L16,1010Z M24,1004 H32 V1012 L24,1011Z" fill="#fff"/>
<g fill="none" stroke="#eee" stroke-width="1.300"><circle cx="74" cy="1002" r="5.500"/><path d="M70,1006 L65,1012"/><path d="M112,997 H124 M112,1011 H124 M113,1000 H124 V1008 H113Z M127,996 V999 M127,1002 V1006 M127,1009 V1012"/></g>
<path d="M164,1004 H179 C180,997 175,995 171,995 C165,995 163,1000 163,1004 C163,1011 167,1013 172,1013 C175,1013 178,1012 180,1010" fill="none" stroke="#0a78d4" stroke-width="4"/>
<path d="M210,996 H218 L220,999 H231 V1012 H210Z" fill="#f7d57a"/><path d="M215,1007 H226 V1013 H223 V1010 H218 V1013 H215Z" fill="#5cb8e8"/><rect x="218" y="1001" width="5" height="1" fill="#d8a840"/>
<path d="M257,999 H280 V1013 Q280,1015 278,1015 H259 Q257,1015 257,1013Z" fill="#fff"/><path d="M264,999 C264,991 273,991 273,999" fill="none" stroke="#fff" stroke-width="1.300"/><rect x="263" y="1001" width="5" height="5" fill="#e8502c"/><rect x="269" y="1001" width="5" height="5" fill="#7cb82c"/><rect x="263" y="1007" width="5" height="5" fill="#0a9de8"/><rect x="269" y="1007" width="5" height="5" fill="#fbb710"/>
<path d="M306,1000 L318,994 L330,1000 L318,1007Z M306,1002 L318,1009 L330,1002 V1013 H306Z" fill="#fff"/><path d="M314,1002 L326,999 L320,1008Z" fill="#000"/>
<rect x="355" y="992" width="24" height="24" fill="#f5c49b"/><path d="M361,1011 L367,996 L373,1011 H370 L367,1003 L364,1011Z" fill="#d07020"/><rect x="364" y="1006" width="6" height="2" fill="#d07020"/>
<g fill="none" stroke="#ddd" stroke-width="1.100"><circle cx="1027" cy="1004" r="2.500"/><circle cx="1033" cy="999" r="2.800"/><path d="M1023,1012 C1023,1009 1025,1007 1027,1007 C1029,1007 1031,1009 1031,1012 M1030,1003 C1033,1002 1036,1004 1037,1007"/><path d="M1059,1008 L1065,1002 L1071,1008" stroke-width="1.400"/><path d="M1086,1010 A11,11 0 0 1 1096,1000 M1089,1011 A7,7 0 0 1 1096,1004" stroke="#777"/><path d="M1105,1001 H1108 L1112,998 V1011 L1108,1008 H1105Z M1115,1001 C1117,1003 1117,1006 1115,1008 M1118,999 C1121,1002 1121,1007 1118,1010"/></g>
<circle cx="1095" cy="1009" r="1.300" fill="#ddd"/>
<text x="1131" y="1008" font-size="12" fill="#eee" textLength="23" lengthAdjust="spacingAndGlyphs">ENG</text>
<text x="1180" y="999" font-size="12" fill="#eee" textLength="27" lengthAdjust="spacingAndGlyphs">13:20</text>
<text x="1167" y="1017" font-size="12" fill="#eee" textLength="54" lengthAdjust="spacingAndGlyphs">05.08.2019</text>
<path d="M1240,998 H1255 V1010 H1250 L1247,1014 V1010 H1240Z" fill="none" stroke="#eee" stroke-width="1.200"/>
<rect x="1275" y="985" width="1" height="38" fill="#444"/>
</svg>
</body></html>
